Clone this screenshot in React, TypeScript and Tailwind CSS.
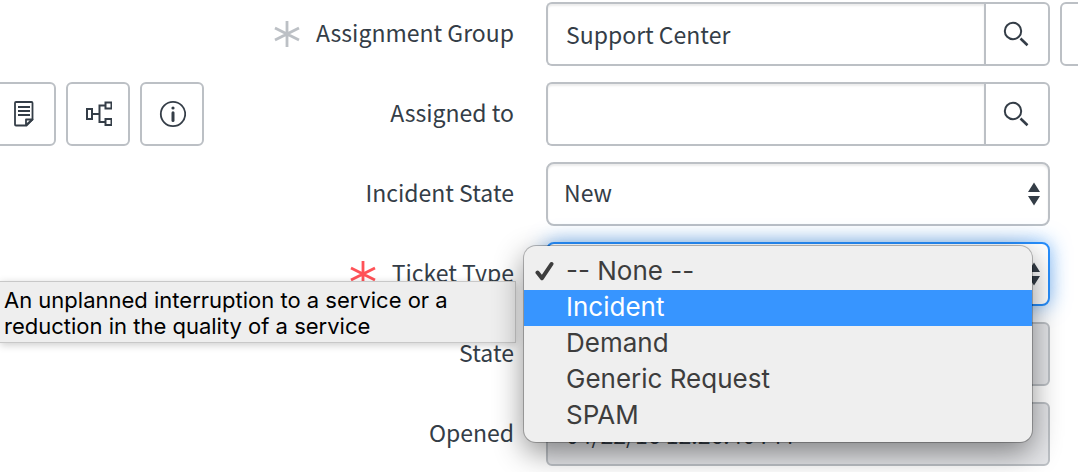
import { useState } from 'react';
import type { ReactNode } from 'react';
import clsx from 'clsx';

const ticketTypes = ['-- None --', 'Incident', 'Demand', 'Generic Request', 'SPAM'];

const fieldClass =
  'h-16 w-full min-w-0 border-2 border-[#bcc0c5] bg-white text-[23px] text-[#343d47] outline-none shadow-[inset_0_2px_2px_rgba(0,0,0,0.08)]';

const readOnlyClass = 'h-16 w-full rounded-md border-2 border-[#bcc0c5] bg-[#e4e5e8] px-[18px] text-[23px]';

function NoteIcon() {
  return (
    <svg width="20" height="26" viewBox="0 0 20 26" fill="none" stroke="currentColor" strokeWidth="1.8">
      <path d="M2 1h15.500q1 0 1 1v16.500l-6 6H2q-1 0-1-1V2q0-1 1-1z" />
      <path d="M12 24v-5.500h6.500z" strokeLinejoin="round" />
      <path d="M4 6h12M4 10h12M4 14h12" />
    </svg>
  );
}

function TreeIcon() {
  return (
    <svg width="28" height="26" viewBox="0 0 28 26" fill="none" stroke="currentColor" strokeWidth="2">
      <path d="M3 8h5v10H3zM21.500 1.500h6v6h-6zM21.500 18h6v6h-6z" />
      <path d="M8 13h7.500M21.500 4.500H15.500V21h6" />
    </svg>
  );
}

function InfoIcon() {
  return (
    <svg width="28" height="28" viewBox="0 0 28 28" fill="none" stroke="currentColor">
      <circle cx="15" cy="14" r="12.200" strokeWidth="1.800" />
      <circle cx="15" cy="8" r="1.600" fill="currentColor" stroke="none" />
      <path d="M15 12.800v7.700" strokeWidth="3" strokeLinecap="round" />
    </svg>
  );
}

function SearchIcon() {
  return (
    <svg width="26" height="26" viewBox="0 0 26 26" fill="none" stroke="currentColor">
      <circle cx="10" cy="10" r="8.200" strokeWidth="2" />
      <path d="M17.500 17.500l7 6.800" strokeWidth="2.600" />
    </svg>
  );
}

function RequiredMark({ className }: { className: string }) {
  return (
    <svg className={className} width="26" height="26" viewBox="0 0 26 26" fill="none" stroke="currentColor" strokeWidth="2.800">
      <path d="M13 0v26M1 7l24 12M25 7L1 19" />
    </svg>
  );
}

function Arrows() {
  return (
    <svg className="pointer-events-none absolute right-[9px] top-5" width="14" height="24" viewBox="0 0 14 24" fill="#343d47">
      <path d="M1 10L7 0.500L13 10zM1 14L7 23.500L13 14z" />
    </svg>
  );
}

function IconButton({ label, children }: { label: string; children: ReactNode }) {
  return (
    <button
      type="button"
      aria-label={label}
      className="flex size-16 shrink-0 items-center justify-center rounded-md border-2 border-[#bcc0c5] bg-white text-[#343d47]"
    >
      {children}
    </button>
  );
}

type RowProps = {
  id: string;
  label: string;
  mark?: string;
  tools?: ReactNode;
  hint?: ReactNode;
  side?: ReactNode;
  children: ReactNode;
};

function Row({ id, label, mark, tools, hint, side, children }: RowProps) {
  return (
    <div className="grid grid-cols-[39fr_38fr]">
      <div className="relative flex min-w-0 items-center pr-8">
        {tools}
        <label htmlFor={id} className="ml-auto flex items-center gap-4 whitespace-nowrap text-[23px] leading-8">
          {mark && <RequiredMark className={mark} />}
          <span className="pb-1">{label}</span>
        </label>
        {hint}
      </div>
      <div className="flex min-w-0 gap-2.5">
        <div className="relative flex min-w-0 flex-1">{children}</div>
        <div className="w-[18px] shrink-0">{side}</div>
      </div>
    </div>
  );
}

function Lookup({ id, value }: { id: string; value: string }) {
  return (
    <>
      <input id={id} type="text" defaultValue={value} className={clsx(fieldClass, 'rounded-l-md border-r-0 px-[18px]')} />
      <button
        type="button"
        aria-label="Look up"
        className="flex h-16 w-[66px] shrink-0 items-center justify-center rounded-r-md border-2 border-[#bcc0c5] bg-white pr-0.5"
      >
        <SearchIcon />
      </button>
    </>
  );
}

export default function App() {
  const [type, setType] = useState('-- None --');
  const [active, setActive] = useState('Incident');

  return (
    <form className="flex flex-col gap-4 overflow-hidden bg-white pb-1.5 pt-0.5 font-['Noto_Sans_CJK_JP',sans-serif] text-[#343d47]">
      <Row
        id="group"
        label="Assignment Group"
        mark="text-[#bcc0c5]"
        side={<IconButton label="More">{null}</IconButton>}
      >
        <Lookup id="group" value="Support Center" />
      </Row>

      <Row
        id="assigned"
        label="Assigned to"
        tools={
          <div className="-ml-2 flex gap-2.5">
            <IconButton label="Notes"><NoteIcon /></IconButton>
            <IconButton label="Dependencies"><TreeIcon /></IconButton>
            <IconButton label="Information"><InfoIcon /></IconButton>
          </div>
        }
      >
        <Lookup id="assigned" value="" />
      </Row>

      <Row id="incident-state" label="Incident State">
        <select id="incident-state" className={clsx(fieldClass, 'appearance-none rounded-lg px-4 pb-1')}>
          <option>New</option>
        </select>
        <Arrows />
      </Row>

      <Row
        id="type"
        label="Ticket Type"
        mark="text-[#ff5257]"
        hint={
          <div
            role="tooltip"
            className="absolute left-0 right-[30px] top-[39px] z-10 border border-[#c8c8c8] border-l-0 bg-[#eeeeee] pb-[3px] pl-1 pr-14 pt-[5px] font-['Inter',sans-serif] text-[22px] leading-[26px] text-black shadow-[0_2px_8px_rgba(0,0,0,0.2)]"
          >
            An unplanned interruption to a service or a reduction in the quality of a service
          </div>
        }
      >
        <select
          id="type"
          value={type}
          onChange={(e) => setType(e.target.value)}
          className="h-16 w-full appearance-none rounded-lg border-2 border-[#278efc] bg-white px-4 pb-1 text-[23px] outline-none shadow-[0_0_20px_rgba(39,142,252,0.6)]"
        >
          {ticketTypes.map((t) => (
            <option key={t}>{t}</option>
          ))}
        </select>
        <Arrows />
        <ul
          role="listbox"
          aria-label="Ticket Type"
          className="absolute -left-[22px] right-[18px] top-1 z-20 rounded-xl bg-[#efefef] py-2 font-['Inter',sans-serif] text-[26px] leading-9 text-[#3d3d3d] shadow-[0_0_0_1px_rgba(0,0,0,0.25),0_10px_30px_rgba(0,0,0,0.45)]"
        >
          {ticketTypes.map((t) => (
            <li
              key={t}
              role="option"
              aria-selected={t === type}
              onMouseEnter={() => setActive(t)}
              onClick={() => setType(t)}
              className={clsx('flex h-9 items-center pb-0.5', t === active && 'bg-[#3795ff] text-white')}
            >
              <span className="flex w-[42px] shrink-0 pl-[11px]">
                {t === type && (
                  <svg width="20" height="20" viewBox="0 0 20 20" fill="none" stroke="currentColor" strokeWidth="4">
                    <path d="M2.500 11.500l4.500 5.700L16.500 3" strokeLinejoin="round" strokeLinecap="round" />
                  </svg>
                )}
              </span>
              {t}
            </li>
          ))}
        </ul>
      </Row>

      <Row id="state" label="State">
        <input id="state" readOnly className={readOnlyClass} />
      </Row>

      <Row id="opened" label="Opened">
        <input id="opened" readOnly value="04/22/16 12:26:40 PM" className={readOnlyClass} />
      </Row>
    </form>
  );
}
